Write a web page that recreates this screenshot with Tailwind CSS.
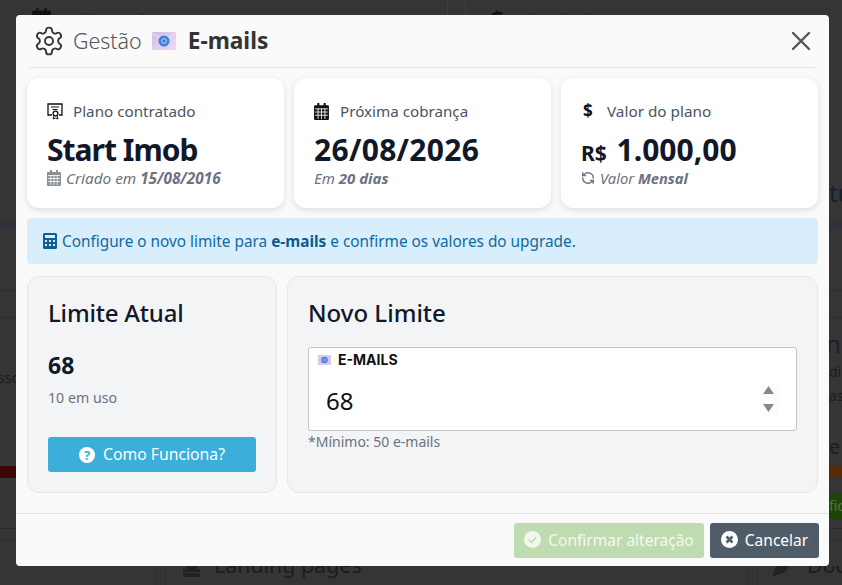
<!DOCTYPE html>
<html lang="pt-BR">
<head>
  <meta charset="UTF-8" />
  <title>Gestão E-mails</title>
  <script src="https://cdn.jsdelivr.net/npm/@tailwindcss/browser@4"></script>
</head>
<body class="bg-[#353535] font-['Noto_Sans','Open_Sans',sans-serif]">
  <div class="relative w-[842px] h-[585px] overflow-hidden bg-[#353535]">
    <!-- pagina escurecida atras do modal -->
    <div class="absolute left-[447px] top-[0px] w-[1px] h-[16px] bg-[#3e3e3e]"></div>
    <div class="absolute left-[465px] top-[0px] w-[1px] h-[16px] bg-[#3e3e3e]"></div>
    <div class="absolute left-[155px] top-[566px] w-[1px] h-[19px] bg-[#2e2e2e]"></div>
    <div class="absolute left-[165px] top-[566px] w-[1px] h-[19px] bg-[#2e2e2e]"></div>
    <div class="absolute left-[748px] top-[566px] w-[1px] h-[19px] bg-[#2e2e2e]"></div>
    <div class="absolute left-[757px] top-[566px] w-[1px] h-[19px] bg-[#2e2e2e]"></div>
    <div class="absolute left-[0px] top-[222px] w-[16px] h-[8px] bg-[#2f3338]"></div>
    <div class="absolute left-[829px] top-[222px] w-[13px] h-[8px] bg-[#2f3338]"></div>
    <div class="absolute left-[0px] top-[290px] w-[16px] h-[1px] bg-[#2c2c2c]"></div>
    <div class="absolute left-[829px] top-[290px] w-[13px] h-[1px] bg-[#2c2c2c]"></div>
    <div class="absolute left-[0px] top-[317px] w-[16px] h-[1px] bg-[#2c2c2c]"></div>
    <div class="absolute left-[829px] top-[317px] w-[13px] h-[1px] bg-[#2c2c2c]"></div>
    <div class="absolute left-[0px] top-[528px] w-[16px] h-[1px] bg-[#2c2c2c]"></div>
    <div class="absolute left-[829px] top-[528px] w-[13px] h-[1px] bg-[#2c2c2c]"></div>
    <div class="absolute left-[0px] top-[540px] w-[16px] h-[1px] bg-[#2c2c2c]"></div>
    <div class="absolute left-[829px] top-[540px] w-[13px] h-[1px] bg-[#2c2c2c]"></div>
    <div class="absolute left-[0px] top-[466px] w-[16px] h-[12px] bg-[#3d0606]"></div>
    <div class="absolute left-[829px] top-[466px] w-[13px] h-[12px] bg-[#552a06]"></div>
    <div class="absolute left-[829px] top-[493px] w-[13px] h-[26px] bg-[#1e4508] text-[14px] leading-[26px] text-[#4e7540] overflow-hidden">fic</div>
    <div class="absolute left-[0px] top-[368px] w-[16px] overflow-hidden text-[14px] leading-[20px] text-[#1c1c1c]"><span class="block -ml-[2px]">ssc</span></div>
    <div class="absolute left-[829px] top-[177px] w-[13px] overflow-hidden text-[24px] leading-[32px] text-[#15202c]"><span class="block">tu</span></div>
    <div class="absolute left-[829px] top-[328px] w-[13px] overflow-hidden text-[24px] leading-[32px] text-[#15202c]"><span class="block -ml-[3px]">nó</span></div>
    <div class="absolute left-[829px] top-[362px] w-[13px] overflow-hidden text-[14px] leading-[20px] text-[#1c1c1c]"><span class="block">dic</span></div>
    <div class="absolute left-[829px] top-[386px] w-[13px] overflow-hidden text-[14px] leading-[20px] text-[#1c1c1c]"><span class="block">as</span></div>
    <div class="absolute left-[829px] top-[434px] w-[13px] overflow-hidden text-[20px] leading-[26px] text-[#15202c]"><span class="block">e</span></div>

    <!-- so a parte visivel das linhas de cima e de baixo -->
    <div class="absolute left-[0px] top-[0px] w-[842px] h-[15px] overflow-hidden">
      <svg class="absolute left-[32px] top-[8px] w-[19px] h-[22px]" viewBox="0 0 14 16"><path fill="#111" d="M3 0h2v2h4V0h2v2h2a1 1 0 0 1 1 1v12a1 1 0 0 1-1 1H1a1 1 0 0 1-1-1V3a1 1 0 0 1 1-1h2z"/></svg>
      <div class="absolute left-[62px] top-[12px] text-[15px] leading-[14px] text-[#1c1c1c]">Próxima cobrança</div>
      <div class="absolute left-[491px] top-[6px] text-[22px] leading-[22px] font-bold text-[#111]">$</div>
      <div class="absolute left-[516px] top-[12px] text-[15px] leading-[14px] text-[#1c1c1c]">Valor do plano</div>
    </div>
    <div class="absolute left-[0px] top-[566px] w-[842px] h-[19px] overflow-hidden">
      <svg class="absolute left-[183px] -top-[6px] w-[17px] h-[17px]" viewBox="0 0 17 17"><path fill="#222" d="M3 0h11v9h3v3H0V9h3zM0 13h17v4H0z"/></svg>
      <div class="absolute left-[214px] -top-[16px] text-[21.400px] leading-[30px] text-[#1c1c1c]">Landing pages</div>
      <svg class="absolute left-[773px] -top-[6px] w-[17px] h-[17px]" viewBox="0 0 17 17"><path fill="#222" d="M17 0 C17 10 10 15 3 15 L0 17 C0 8 6 1 17 0z"/></svg>
      <div class="absolute left-[807px] -top-[16px] text-[21.400px] leading-[30px] text-[#1c1c1c]">Doc</div>
    </div>

    <!-- modal -->
    <div class="absolute left-[16px] top-[15px] w-[813px] h-[551px] bg-[#fafafa] rounded-[4px] flex flex-col">
      <div class="mx-[14px] h-[53px] border-b border-[#e3e3e6] flex items-center justify-between shrink-0">
        <div class="flex items-center">
          <svg class="ml-[3px] w-[32px] h-[32px]" viewBox="0 0 24 24" fill="none" stroke="#333" stroke-width="1.400" stroke-linecap="round" stroke-linejoin="round">
            <path d="M12.22 2h-.44a2 2 0 0 0-2 2v.18a2 2 0 0 1-1 1.73l-.43.25a2 2 0 0 1-2 0l-.15-.08a2 2 0 0 0-2.73.73l-.22.38a2 2 0 0 0 .73 2.73l.15.1a2 2 0 0 1 1 1.72v.51a2 2 0 0 1-1 1.74l-.15.09a2 2 0 0 0-.73 2.73l.22.38a2 2 0 0 0 2.73.73l.15-.08a2 2 0 0 1 2 0l.43.25a2 2 0 0 1 1 1.73V20a2 2 0 0 0 2 2h.44a2 2 0 0 0 2-2v-.18a2 2 0 0 1 1-1.73l.43-.25a2 2 0 0 1 2 0l.15.08a2 2 0 0 0 2.73-.73l.22-.39a2 2 0 0 0-.73-2.73l-.15-.08a2 2 0 0 1-1-1.74v-.5a2 2 0 0 1 1-1.74l.15-.09a2 2 0 0 0 .73-2.73l-.22-.38a2 2 0 0 0-2.73-.73l-.15.08a2 2 0 0 1-2 0l-.43-.25a2 2 0 0 1-1-1.73V4a2 2 0 0 0-2-2z"/>
            <circle cx="12" cy="12" r="3"/>
          </svg>
          <span class="ml-[8px] text-[21.400px] leading-[28px] text-[#555] font-light">Gestão</span>
          <svg class="ml-[10px] w-[24px] h-[18px]" viewBox="0 0 24 18">
            <defs><linearGradient id="env" x1="0" y1="0" x2="1" y2="1"><stop offset="0" stop-color="#cdbfe6"/><stop offset="1" stop-color="#f1d9f2"/></linearGradient></defs>
            <rect width="24" height="18" fill="url(#env)"/>
            <path d="M0 1 L12 9 L24 1" fill="none" stroke="#efe6f6" stroke-width="1"/>
            <circle cx="12" cy="9" r="5.500" fill="#3f7fd8"/>
            <circle cx="12" cy="9" r="2.400" fill="none" stroke="#cfe0f8" stroke-width="0.900"/>
          </svg>
          <span class="ml-[12px] text-[22.700px] leading-[28px] font-bold text-[#333]">E-mails</span>
        </div>
        <svg class="mr-[4px] w-[20px] h-[20px]" viewBox="0 0 20 20" stroke="#555" stroke-width="2.400" stroke-linecap="round"><path d="M2 2 L18 18 M18 2 L2 18"/></svg>
      </div>

      <div class="px-[11px] pt-[10px] flex-1">
        <div class="grid grid-cols-3 gap-[10px]">
          <div class="bg-white rounded-[12px] shadow-[0_2px_6px_rgba(0,0,0,0.12)] h-[130px] px-[20px] pt-[21px]">
            <div class="flex items-center h-[24px]">
              <svg class="w-[16px] h-[17px]" viewBox="0 0 16 17" fill="none" stroke="#111" stroke-width="1.300"><path d="M5 12 H1 V1 H15 V12 H12"/><path d="M4 4 H12 M5.500 6.500 H10.500" stroke-width="1"/><circle cx="8.500" cy="10.500" r="2.400"/><path d="M7 13 L6 16 L8.500 15 L11 16 L10 13" stroke-width="1"/></svg>
              <span class="ml-[10px] text-[15.200px] leading-[22px] text-[#4b5563]">Plano contratado</span>
            </div>
            <div class="mt-[8px] text-[30px] leading-[38px] font-bold tracking-[-1px] text-[#111827]">Start Imob</div>
            <div class="flex items-center text-[15.300px] leading-[18px] italic text-[#6b7280]">
              <svg class="w-[14px] h-[16px] mr-[5px]" viewBox="0 0 14 16"><path fill="#8b8f98" d="M3 0h2v2h4V0h2v2h2a1 1 0 0 1 1 1v12a1 1 0 0 1-1 1H1a1 1 0 0 1-1-1V3a1 1 0 0 1 1-1h2z"/><path stroke="#fff" stroke-width="0.800" d="M1 5.500h12M1 8.500h12M1 11.500h12M3.800 5v10M7 5v10M10.200 5v10"/></svg>
              <span>Criado em <b>15/08/2016</b></span>
            </div>
          </div>
          <div class="bg-white rounded-[12px] shadow-[0_2px_6px_rgba(0,0,0,0.12)] h-[130px] px-[20px] pt-[21px]">
            <div class="flex items-center h-[24px]">
              <svg class="w-[15px] h-[17px]" viewBox="0 0 14 16"><path fill="#111" d="M3 0h2v2h4V0h2v2h2a1 1 0 0 1 1 1v12a1 1 0 0 1-1 1H1a1 1 0 0 1-1-1V3a1 1 0 0 1 1-1h2z"/><path stroke="#fff" stroke-width="0.800" d="M1 5.500h12M1 8.500h12M1 11.500h12M3.800 5v10M7 5v10M10.200 5v10"/></svg>
              <span class="ml-[11px] text-[15.200px] leading-[22px] text-[#4b5563]">Próxima cobrança</span>
            </div>
            <div class="mt-[8px] text-[30px] leading-[38px] font-bold tracking-[0.300px] text-[#111827]">26/08/2026</div>
            <div class="text-[15px] leading-[18px] italic text-[#6b7280]">Em <b>20 dias</b></div>
          </div>
          <div class="bg-white rounded-[12px] shadow-[0_2px_6px_rgba(0,0,0,0.12)] h-[130px] px-[20px] pt-[21px]">
            <div class="flex items-center h-[24px]">
              <span class="w-[15px] text-[17px] leading-[22px] font-bold text-[#111] text-left pl-[2px]">$</span>
              <span class="ml-[11px] text-[15.300px] leading-[22px] text-[#4b5563]">Valor do plano</span>
            </div>
            <div class="mt-[8px] h-[38px] text-[30px] leading-[38px] font-bold text-[#111827]"><span class="text-[21px] leading-none mr-[2px]">R$</span> 1.000,00</div>
            <div class="flex items-center text-[14.700px] leading-[18px] italic text-[#6b7280]">
              <svg class="w-[14px] h-[14px] mr-[5px]" viewBox="0 0 24 24" fill="none" stroke="#6b7280" stroke-width="2.400" stroke-linecap="round" stroke-linejoin="round"><path d="M21 12a9 9 0 0 0-15.500-6.200L3 8M3 3v5h5"/><path d="M3 12a9 9 0 0 0 15.500 6.200L21 16M21 21v-5h-5"/></svg>
              <span>Valor <b>Mensal</b></span>
            </div>
          </div>
        </div>

        <div class="mt-[10px] h-[46px] bg-[#d8eefd] rounded-[4px] flex items-center pl-[16px] pt-[2px] text-[15.350px] text-[#0f6a9e]">
          <svg class="w-[14px] h-[16px] mr-[5px] shrink-0 -mt-[2px]" viewBox="0 0 14 16"><path fill-rule="evenodd" fill="#0f5f92" d="M1.500 0h11A1.500 1.500 0 0 1 14 1.500v13a1.500 1.500 0 0 1-1.500 1.500h-11A1.500 1.500 0 0 1 0 14.500v-13A1.500 1.500 0 0 1 1.500 0zM2 2v3h10V2zM2 7v2h2V7zM6 7v2h2V7zM10 7v2h2V7zM2 11v2h2v-2zM6 11v2h2v-2zM10 11v2h2v-2z"/></svg>
          <span>Configure o novo limite para <b class="text-[#0b5c8c]">e-mails</b> e confirme os valores do upgrade.</span>
        </div>

        <div class="mt-[12px] flex gap-[10px] h-[217px]">
          <div class="w-[250px] bg-[#f3f4f6] border border-[#e5e7eb] rounded-[12px] px-[20px] pt-[20px]">
            <div class="text-[24px] leading-[32px] font-medium tracking-[-0.200px] text-[#111827]">Limite Atual</div>
            <div class="mt-[20px] text-[23px] leading-[32px] font-bold text-[#111827]">68</div>
            <div class="mt-[7px] text-[14.200px] leading-[20px] text-[#6b7280]">10 em uso</div>
            <button class="mt-[29px] w-[208px] h-[35px] bg-[#3bafda] rounded-[3px] text-white text-[15.750px] pt-[1px] flex items-center justify-center">
              <svg class="w-[16px] h-[16px] mr-[8px] -mt-[1px]" viewBox="0 0 16 16"><circle cx="8" cy="8" r="8" fill="#fff"/><text x="8" y="12.500" text-anchor="middle" font-size="13" font-weight="700" fill="#3bafda" font-family="Noto Sans">?</text></svg>
              Como Funciona?
            </button>
          </div>
          <div class="flex-1 bg-[#f3f4f6] border border-[#e5e7eb] rounded-[12px] px-[20px] pt-[20px]">
            <div class="text-[24px] leading-[32px] font-medium text-[#111827]">Novo Limite</div>
            <div class="relative mt-[18px] w-[489px] h-[84px] bg-white border border-[#c4c4c4] rounded-[3px]">
              <div class="flex items-center pl-[9px] pt-[2px]">
                <svg class="w-[13px] h-[10px]" viewBox="0 0 24 18"><rect width="24" height="18" fill="#d9c8ee"/><circle cx="12" cy="9" r="6" fill="#3f7fd8"/><circle cx="12" cy="9" r="2.600" fill="none" stroke="#cfe0f8"/></svg>
                <span class="ml-[7px] text-[14px] leading-[20px] font-bold text-[#111] font-['Inter']">E-MAILS</span>
              </div>
              <div class="mt-[15px] ml-[17px] text-[24px] leading-[32px] text-[#111]">68</div>
              <div class="absolute right-[18px] top-[35px] w-[19px] h-[32px] flex flex-col items-center justify-center gap-[10px] bg-[#fcfcfc]">
                <svg class="w-[11px] h-[8px]" viewBox="0 0 12 10" preserveAspectRatio="none"><path fill="#888" d="M6 0 L12 10 H0z"/></svg>
                <svg class="w-[11px] h-[8px]" viewBox="0 0 12 10" preserveAspectRatio="none"><path fill="#888" d="M0 0 H12 L6 10z"/></svg>
              </div>
            </div>
            <div class="mt-[1px] text-[14px] leading-[20px] text-[#6b7280]">*Mínimo: 50 e-mails</div>
          </div>
        </div>
      </div>

      <div class="h-[53px] border-t border-[#e3e3e6] flex items-center justify-end gap-[6px] pr-[10px] pt-[1px] shrink-0">
        <button class="w-[190px] h-[35px] bg-[#bfdbb0] rounded-[3px] text-[#f4f9f1] text-[15.500px] flex items-center justify-center">
          <svg class="w-[17px] h-[17px] mr-[7px] -mt-[2px]" viewBox="0 0 16 16"><circle cx="8" cy="8" r="8" fill="#f1f7ec"/><path d="M4.500 8.300 L7 10.800 L11.500 5.800" fill="none" stroke="#bfdbb0" stroke-width="1.400"/></svg>
          Confirmar alteração
        </button>
        <button class="w-[109px] h-[35px] bg-[#505d68] rounded-[3px] text-white text-[15.500px] flex items-center justify-center">
          <svg class="w-[17px] h-[17px] mr-[7px] -mt-[2px]" viewBox="0 0 16 16"><circle cx="8" cy="8" r="8" fill="#fff"/><path d="M5.200 5.200 L10.800 10.800 M10.800 5.200 L5.200 10.800" stroke="#505d68" stroke-width="2.400"/></svg>
          Cancelar
        </button>
      </div>
    </div>
  </div>
</body>
</html>
